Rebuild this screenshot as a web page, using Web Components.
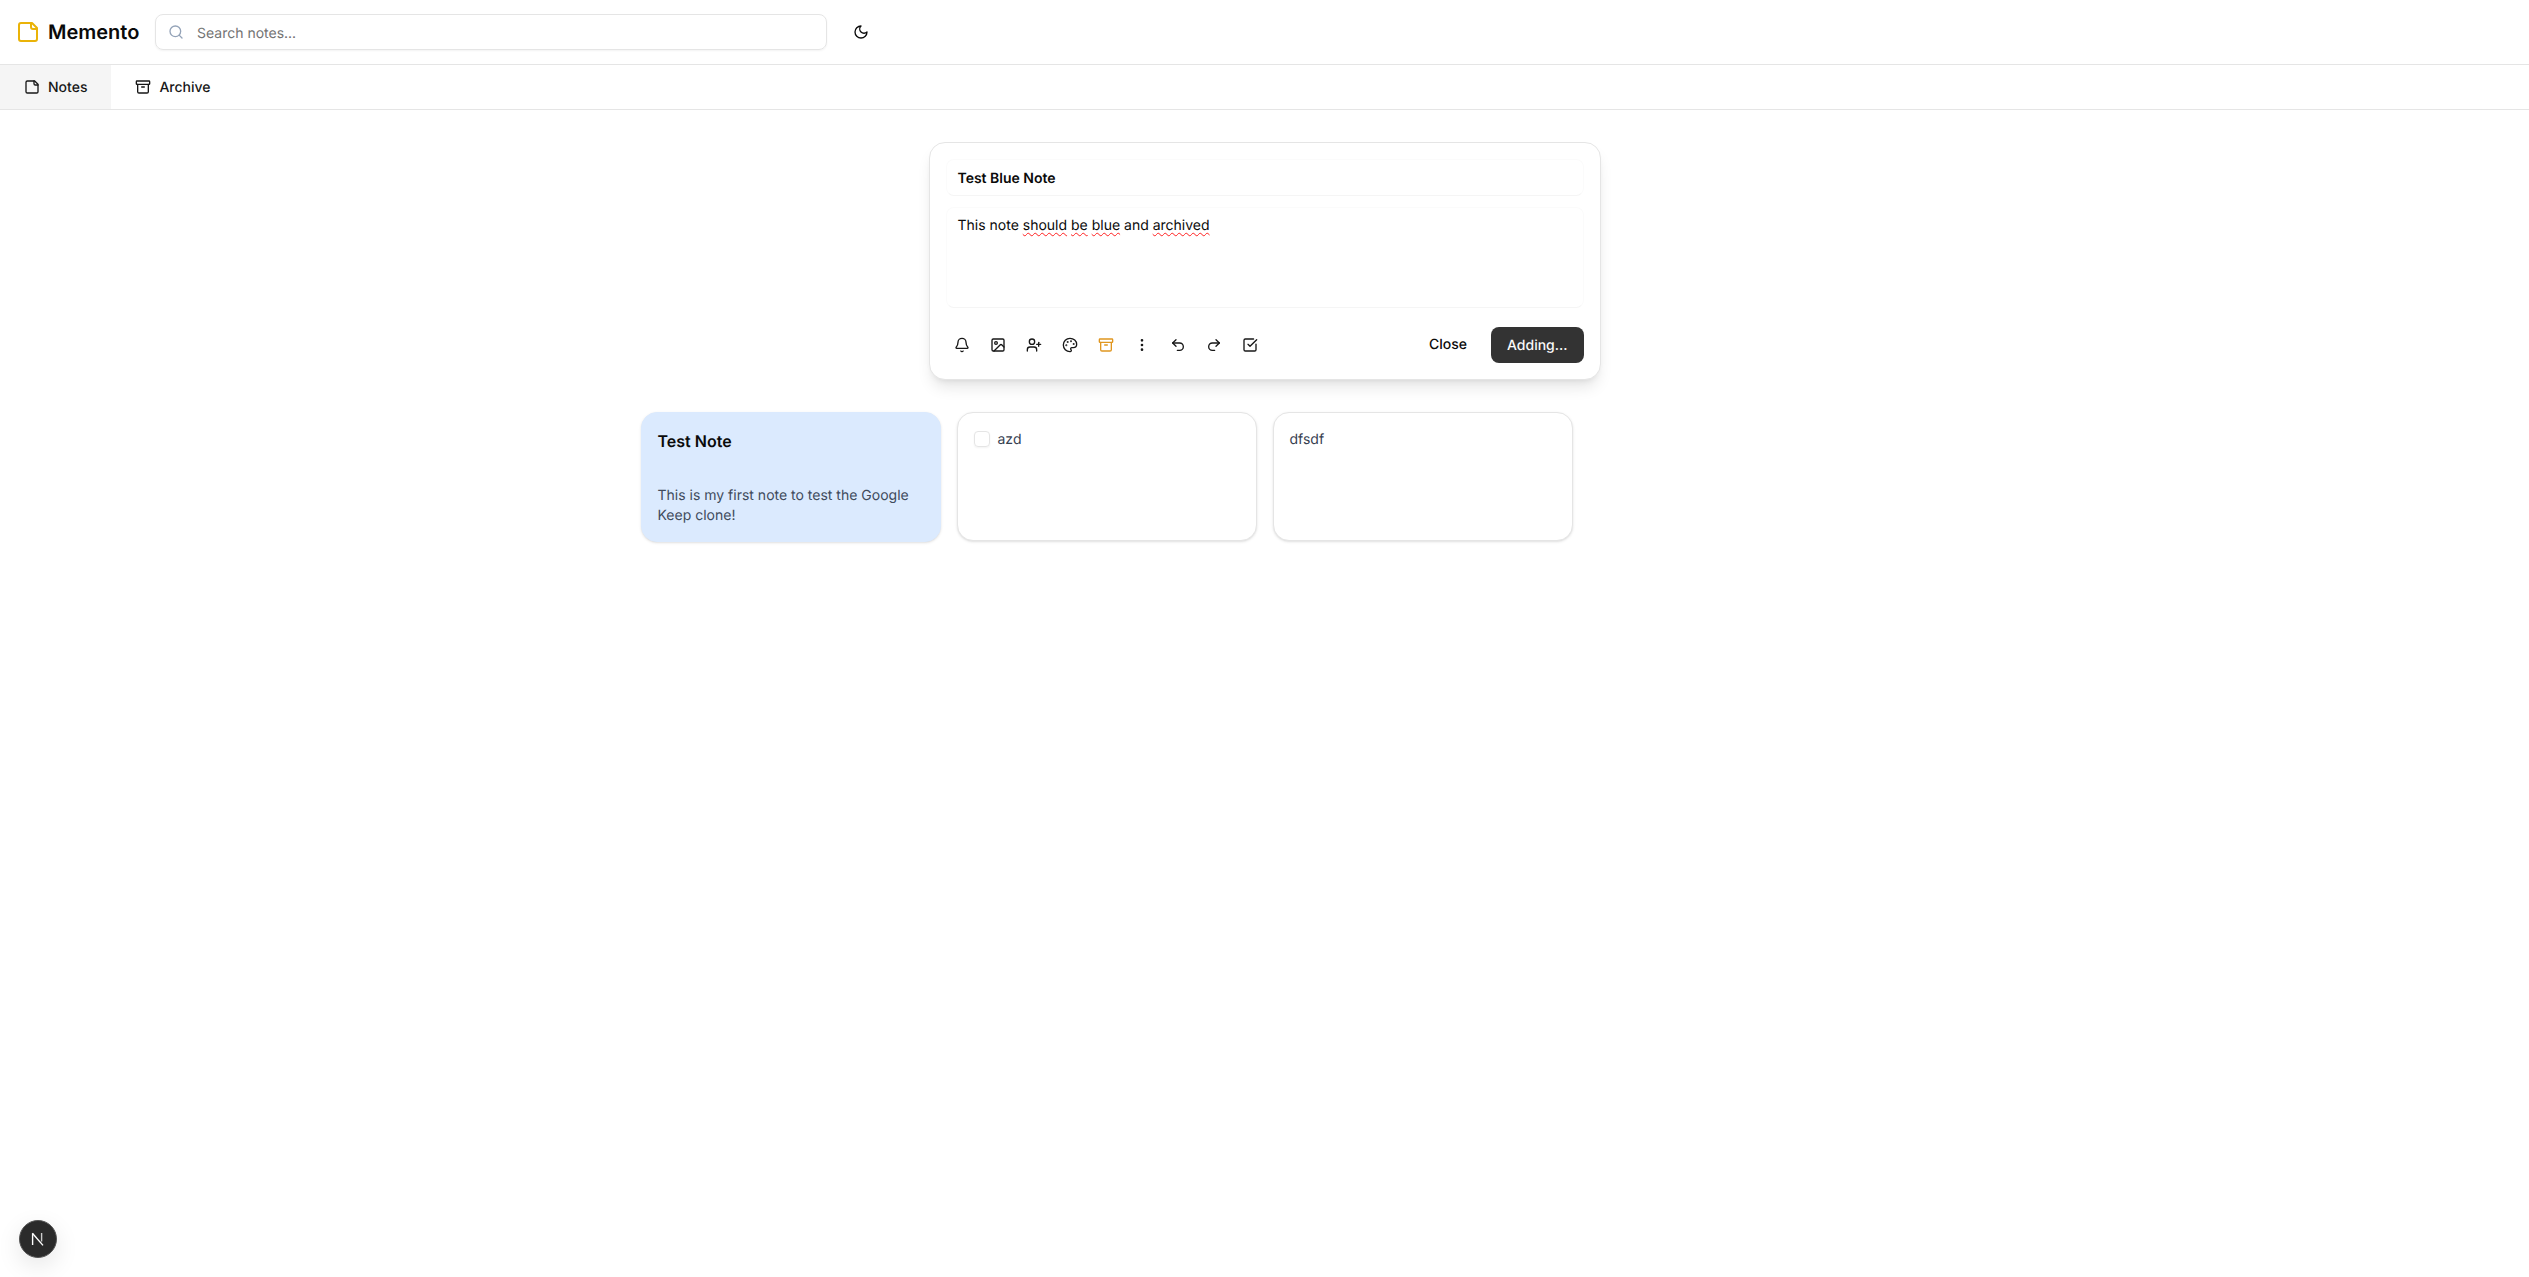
<!DOCTYPE html>
<html lang="en">
<head>
<meta charset="utf-8">
<title>Memento</title>
<style>
  html, body { margin: 0; padding: 0; background: #fff; }
  body { font-family: Inter, "Liberation Sans", sans-serif; color: #0a0a0a; min-height: 100vh; text-rendering: geometricPrecision; }
</style>
</head>
<body>
<app-header></app-header>
<nav-tabs>
  <nav-tab icon="file" active>Notes</nav-tab>
  <nav-tab icon="archive">Archive</nav-tab>
</nav-tabs>
<notes-page>
  <note-composer slot="composer"></note-composer>
  <note-card color="blue" heading="Test Note">This is my first note to test the Google Keep clone!</note-card>
  <note-card checkbox>azd</note-card>
  <note-card>dfsdf</note-card>
</notes-page>
<dev-badge></dev-badge>

<script>
// lucide paths
const ICONS = {
  note: '<path d="M16 3H5a2 2 0 0 0-2 2v14a2 2 0 0 0 2 2h14a2 2 0 0 0 2-2V8Z"/><path d="M15 3v4a2 2 0 0 0 2 2h4"/>',
  search: '<circle cx="11" cy="11" r="8"/><path d="m21 21-4.3-4.3"/>',
  moon: '<path d="M12 3a6 6 0 0 0 9 9 9 9 0 1 1-9-9Z"/>',
  file: '<path d="M16 3H5a2 2 0 0 0-2 2v14a2 2 0 0 0 2 2h14a2 2 0 0 0 2-2V8Z"/><path d="M15 3v4a2 2 0 0 0 2 2h4"/>',
  archive: '<rect width="20" height="5" x="2" y="3" rx="1"/><path d="M4 8v11a2 2 0 0 0 2 2h12a2 2 0 0 0 2-2V8"/><path d="M10 12h4"/>',
  bell: '<path d="M10.268 21a2 2 0 0 0 3.464 0"/><path d="M3.262 15.326A1 1 0 0 0 4 17h16a1 1 0 0 0 .74-1.673C19.41 13.956 18 12.499 18 8A6 6 0 0 0 6 8c0 4.499-1.411 5.956-2.738 7.326"/>',
  image: '<rect width="18" height="18" x="3" y="3" rx="2" ry="2"/><circle cx="9" cy="9" r="2"/><path d="m21 15-3.086-3.086a2 2 0 0 0-2.828 0L6 21"/>',
  userplus: '<path d="M16 21v-2a4 4 0 0 0-4-4H6a4 4 0 0 0-4 4v2"/><circle cx="9" cy="7" r="4"/><line x1="19" x2="19" y1="8" y2="14"/><line x1="22" x2="16" y1="11" y2="11"/>',
  palette: '<path d="M12 22a1 1 0 0 1 0-20 10 9 0 0 1 10 9 5 5 0 0 1-5 5h-2.25a1.75 1.75 0 0 0-1.4 2.8l.3.4a1.75 1.75 0 0 1-1.4 2.8z"/><circle cx="13.5" cy="6.5" r=".5" fill="currentColor"/><circle cx="17.5" cy="10.5" r=".5" fill="currentColor"/><circle cx="6.5" cy="12.5" r=".5" fill="currentColor"/><circle cx="8.5" cy="7.5" r=".5" fill="currentColor"/>',
  more: '<circle cx="12" cy="12" r="1"/><circle cx="12" cy="5" r="1"/><circle cx="12" cy="19" r="1"/>',
  undo: '<path d="M9 14 4 9l5-5"/><path d="M4 9h10.5a5.5 5.5 0 0 1 5.5 5.5a5.5 5.5 0 0 1-5.5 5.5H11"/>',
  redo: '<path d="m15 14 5-5-5-5"/><path d="M20 9H9.5A5.5 5.5 0 0 0 4 14.5A5.5 5.5 0 0 0 9.5 20H13"/>',
  check: '<path d="M21 10.656V19a2 2 0 0 1-2 2H5a2 2 0 0 1-2-2V5a2 2 0 0 1 2-2h12.344"/><path d="m9 11 3 3L22 4"/>'
};

class AppIcon extends HTMLElement {
  connectedCallback() {
    const size = this.getAttribute('size') || 16;
    this.attachShadow({ mode: 'open' });
    this.shadowRoot.innerHTML = `
      <style>
        :host { display: inline-flex; flex: none; width: ${size}px; height: ${size}px; }
        svg { display: block; }
      </style>
      <svg xmlns="http://www.w3.org/2000/svg" width="${size}" height="${size}" viewBox="0 0 24 24" fill="none"
        stroke="currentColor" stroke-width="2" stroke-linecap="round" stroke-linejoin="round">${ICONS[this.getAttribute('name')]}</svg>`;
  }
}
customElements.define('app-icon', AppIcon);

class AppHeader extends HTMLElement {
  constructor() {
    super();
    this.attachShadow({ mode: 'open' });
    this.shadowRoot.innerHTML = `
      <style>
        :host {
          display: flex; align-items: center; height: 64px; padding: 0 16px;
          border-bottom: 1px solid #e5e5e5; background: #fff;
        }
        .logo { display: flex; align-items: center; gap: 8px; width: 139px; }
        .logo app-icon { color: #eab308; }
        .name { font-size: 20px; line-height: 28px; font-weight: 600; color: #0a0a0a; }
        .search {
          display: flex; align-items: center; gap: 13px; box-sizing: border-box;
          width: 672px; height: 36px; padding: 0 12px; border: 1px solid #e5e5e5; border-radius: 8px;
          box-shadow: 0 1px 2px rgba(0,0,0,.05);
          font-size: 14px; color: #737373;
        }
        .search span { padding-top: 2px; }
        .search app-icon { color: #94a3b8; }
        .theme { margin-left: 26px; display: flex; color: #0a0a0a; }
      </style>
      <div class="logo"><app-icon name="note" size="24"></app-icon><span class="name">Memento</span></div>
      <div class="search"><app-icon name="search"></app-icon><span>Search notes...</span></div>
      <div class="theme"><app-icon name="moon"></app-icon></div>`;
  }
}
customElements.define('app-header', AppHeader);

class NavTabs extends HTMLElement {
  constructor() {
    super();
    this.attachShadow({ mode: 'open' });
    this.shadowRoot.innerHTML = `
      <style>
        :host { display: flex; height: 44px; border-bottom: 1px solid #e5e5e5; }
      </style>
      <slot></slot>`;
  }
}
customElements.define('nav-tabs', NavTabs);

class NavTab extends HTMLElement {
  connectedCallback() {
    this.attachShadow({ mode: 'open' });
    this.shadowRoot.innerHTML = `
      <style>
        :host {
          display: flex; align-items: center; gap: 8px; padding: 0 24px;
          font-size: 14px; font-weight: 500; color: #171717;
        }
        :host([active]) { background: #f5f5f5; }
      </style>
      <app-icon name="${this.getAttribute('icon')}"></app-icon><slot></slot>`;
  }
}
customElements.define('nav-tab', NavTab);

class NotesPage extends HTMLElement {
  constructor() {
    super();
    this.attachShadow({ mode: 'open' });
    this.shadowRoot.innerHTML = `
      <style>
        :host { display: block; padding-top: 32px; }
        .top { display: flex; justify-content: center; margin-bottom: 32px; }
        .grid { display: grid; grid-template-columns: repeat(4, 300px); gap: 16px; justify-content: center; align-items: start; }
      </style>
      <div class="top"><slot name="composer"></slot></div>
      <div class="grid"><slot></slot></div>`;
  }
}
customElements.define('notes-page', NotesPage);

class NoteComposer extends HTMLElement {
  constructor() {
    super();
    this.attachShadow({ mode: 'open' });
    const tools = ['bell', 'image', 'userplus', 'palette', 'archive', 'more', 'undo', 'redo', 'check'];
    this.shadowRoot.innerHTML = `
      <style>
        :host {
          display: flex; flex-direction: column; box-sizing: border-box; width: 672px; height: 238px; padding: 16px;
          background: #fff; border: 1px solid #e5e5e5; border-radius: 16px;
          box-shadow: 0 10px 15px -3px rgba(0,0,0,.1), 0 4px 6px -4px rgba(0,0,0,.1);
        }
        .title, .body {
          box-sizing: border-box; border-radius: 8px; padding: 0 11px;
          border: 1px solid #fbfbfb; border-bottom-color: #f5f5f5;
        }
        .title { height: 37px; line-height: 38px; font-size: 14px; font-weight: 600; color: #0a0a0a; }
        .body { height: 101px; margin-top: 11px; padding-top: 8px; line-height: 20px; font-size: 14px; color: #0a0a0a; }
        .sp { text-decoration: underline wavy #ff2020 1px; text-underline-offset: 2px; }
        .foot { display: flex; align-items: center; margin-top: auto; }
        .tools { display: flex; gap: 4px; }
        .tool { width: 32px; height: 32px; display: flex; align-items: center; justify-content: center; color: #171717; }
        .tool.on { color: #e0961f; }
        .close { margin-left: auto; font-size: 14px; font-weight: 500; color: #0a0a0a; padding: 0 16px; line-height: 37px; }
        .add {
          height: 36px; line-height: 37px; padding: 0 16px; margin-left: 8px; border-radius: 8px;
          background: #333; color: #fafafa; font-size: 14px; font-weight: 500;
        }
      </style>
      <div class="title">Test Blue Note</div>
      <div class="body">This note <span class="sp">should</span> <span class="sp">be</span> <span class="sp">blue</span> and <span class="sp">archived</span></div>
      <div class="foot">
        <div class="tools">${tools.map(t => `<div class="tool${t === 'archive' ? ' on' : ''}"><app-icon name="${t}"></app-icon></div>`).join('')}</div>
        <span class="close">Close</span>
        <span class="add">Adding...</span>
      </div>`;
  }
}
customElements.define('note-composer', NoteComposer);

class NoteCard extends HTMLElement {
  connectedCallback() {
    this.attachShadow({ mode: 'open' });
    const heading = this.getAttribute('heading');
    const box = this.hasAttribute('checkbox');
    this.shadowRoot.innerHTML = `
      <style>
        :host {
          display: block; box-sizing: border-box; height: 129px; padding: 16px;
          background: #fff; border: 1px solid #e5e5e5; border-radius: 16px;
          box-shadow: 0 1px 3px rgba(0,0,0,.1), 0 1px 2px -1px rgba(0,0,0,.1);
        }
        :host([color="blue"]) { height: 130px; background: #dbeafe; border-color: #dbeafe; }
        h3 { margin: 0 0 33px; font-size: 16px; line-height: 24px; font-weight: 600; color: #0a0a0a; }
        .text { margin-top: 1px; font-size: 14px; line-height: 20px; color: #374151; }
        :host([color="blue"]) .text { margin-top: 0; color: #404b5c; }
        .row { display: flex; align-items: flex-start; gap: 8px; }
        .cb { box-sizing: border-box; width: 16px; height: 16px; margin-top: 2px; border: 1px solid #e5e5e5; border-radius: 4px; box-shadow: 0 1px 2px rgba(0,0,0,.05); }
      </style>
      ${heading ? `<h3>${heading}</h3>` : ''}
      <div class="row">${box ? '<span class="cb"></span>' : ''}<span class="text"><slot></slot></span></div>`;
  }
}
customElements.define('note-card', NoteCard);

class DevBadge extends HTMLElement {
  constructor() {
    super();
    this.attachShadow({ mode: 'open' });
    // next.js dev indicator sits over the page corner
    this.shadowRoot.innerHTML = `
      <style>
        :host {
          position: fixed; left: 19px; bottom: 19px; width: 38px; height: 38px; border-radius: 50%;
          display: flex; align-items: center; justify-content: center; box-sizing: border-box;
          background: #2b2b2b; border: 1px solid #555;
          box-shadow: 0 8px 24px rgba(0,0,0,.1);
        }
        svg { display: block; }
      </style>
      <svg xmlns="http://www.w3.org/2000/svg" width="14" height="14" viewBox="0 0 14 14" fill="none" stroke="#fff" stroke-width="1.4">
        <path d="M1.6 13V1.4"/><path d="M1.4 1.2 12 13.4"/><path d="M10.6 1v8.5" stroke="#ccc"/>
      </svg>`;
  }
}
customElements.define('dev-badge', DevBadge);
</script>
</body>
</html>
